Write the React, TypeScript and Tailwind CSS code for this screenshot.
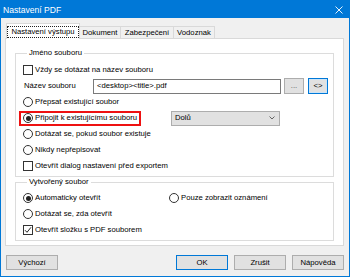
import React from "react"

const Check = ({ on }: { on?: boolean }) => (
  <span className="w-[10px] h-[10px] shrink-0 border border-[#333333] bg-white flex items-center justify-center">
    {on && (
      <svg width="8" height="8" viewBox="0 0 8 8">
        <path d="M1 4.2 L3 6.3 L7 1.3" stroke="#222222" strokeWidth="1" fill="none" />
      </svg>
    )}
  </span>
)

const Radio = ({ on }: { on?: boolean }) => (
  <span className="w-[10px] h-[10px] shrink-0 rounded-full border border-[#333333] bg-white flex items-center justify-center">
    {on && <span className="w-[5px] h-[5px] rounded-full bg-[#222222]" />}
  </span>
)

const Option = ({
  kind,
  on,
  label,
}: {
  kind: "check" | "radio"
  on?: boolean
  label: string
}) => (
  <div className="flex items-center gap-[2px]">
    {kind === "check" ? <Check on={on} /> : <Radio on={on} />}
    <span className="whitespace-nowrap">{label}</span>
  </div>
)

const Row = ({ children }: { children: React.ReactNode }) => (
  <div className="h-[16px] flex items-center">{children}</div>
)

const Btn = ({
  label,
  primary,
  className = "",
}: {
  label: string
  primary?: boolean
  className?: string
}) => (
  <div
    className={[
      "h-[15px] flex items-center justify-center bg-[#e1e1e1] border",
      primary ? "border-[#0078d7]" : "border-[#adadad]",
      className,
    ].join(" ")}
  >
    {label}
  </div>
)

export default function App() {
  return (
    <div className="w-[350px] h-[277px] flex flex-col border border-[#0078d7] bg-[#f0f0f0] text-black text-[7.7px] leading-[10px] font-['Liberation_Sans',Arial,sans-serif]">
      {/* title bar */}
      <div className="h-[17px] shrink-0 bg-[#0078d7] flex items-center justify-between pl-[2px] pr-[6px] text-white text-[8.6px]">
        <span>Nastavení PDF</span>
        <svg width="8" height="8" viewBox="0 0 8 8">
          <path d="M0.5 0.5 L7.5 7.5 M7.5 0.5 L0.5 7.5" stroke="#ffffff" strokeWidth="0.9" />
        </svg>
      </div>

      <div className="flex-1 flex flex-col pt-[5px] pl-[4px] pr-[5px]">
        {/* tabs */}
        <div className="h-[15px] flex items-end relative z-10">
          <div className="ml-[1px] w-[74px] h-[16px] mb-[-1px] bg-white border border-b-0 border-[#d9d9d9] flex items-center justify-center">
            <span className="border border-dotted border-[#222222] px-[3px] leading-[10px]">
              Nastavení výstupu
            </span>
          </div>
          <div className="w-[41px] h-[12px] border border-l-0 border-b-0 border-[#d9d9d9] flex items-center justify-center">
            Dokument
          </div>
          <div className="w-[53px] h-[12px] border border-l-0 border-b-0 border-[#d9d9d9] flex items-center justify-center">
            Zabezpečení
          </div>
          <div className="w-[41px] h-[12px] border border-l-0 border-b-0 border-[#d9d9d9] flex items-center justify-center">
            Vodoznak
          </div>
        </div>

        {/* panel */}
        <div className="h-[208px] bg-white border border-[#d9d9d9] pt-[9px] px-[9px]">
          <fieldset className="border border-[#dcdcdc] pl-[7px] pt-[4px] pb-[2px]">
            <legend className="ml-[4px] px-[2px] leading-[10px]">Jméno souboru</legend>
            <Row>
              <Option kind="check" label="Vždy se dotázat na název souboru" />
            </Row>
            <Row>
              <span className="w-[70px] pl-[1px]">Název souboru</span>
              <div className="w-[188px] h-[15px] border border-[#7a7a7a] bg-white flex items-center pl-[3px]">
                {"<desktop><title>.pdf"}
              </div>
              <Btn label="..." className="ml-[3px] w-[20px] h-[16px] text-[#555555]" />
              <Btn label="<>" primary className="ml-[4px] w-[20px] h-[16px] shadow-[inset_0_0_0_1px_#cce4f7]" />
            </Row>
            <Row>
              <Option kind="radio" label="Přepsat existující soubor" />
            </Row>
            <Row>
              <div className="w-[122px] -ml-[4px] h-[15px] border-2 border-[#ee1111] pl-[2px] flex items-center">
                <Option kind="radio" on label="Připojit k existujícímu souboru" />
              </div>
              <div className="ml-[30px] w-[109px] h-[15px] bg-[#e1e1e1] border border-[#adadad] flex items-center justify-between pl-[3px] pr-[4px]">
                <span>Dolů</span>
                <svg width="6" height="4" viewBox="0 0 6 4">
                  <path d="M0.5 0.5 L3 3 L5.5 0.5" stroke="#444444" strokeWidth="0.8" fill="none" />
                </svg>
              </div>
            </Row>
            <Row>
              <Option kind="radio" label="Dotázat se, pokud soubor existuje" />
            </Row>
            <Row>
              <Option kind="radio" label="Nikdy nepřepisovat" />
            </Row>
            <Row>
              <Option kind="check" label="Otevřít dialog nastavení před exportem" />
            </Row>
          </fieldset>

          <fieldset className="border border-[#dcdcdc] pl-[7px] pt-[3px] pb-[2px]">
            <legend className="ml-[4px] px-[2px] leading-[10px]">Vytvořený soubor</legend>
            <Row>
              <div className="w-[146px]">
                <Option kind="radio" on label="Automaticky otevřít" />
              </div>
              <Option kind="radio" label="Pouze zobrazit oznámení" />
            </Row>
            <Row>
              <Option kind="radio" label="Dotázat se, zda otevřít" />
            </Row>
            <Row>
              <Option kind="check" on label="Otevřít složku s PDF souborem" />
            </Row>
          </fieldset>
        </div>

        {/* bottom buttons */}
        <div className="mt-[9px] flex justify-between">
          <Btn label="Výchozí" className="ml-[1px] w-[52px]" />
          <div className="flex gap-[6px]">
            <Btn label="OK" primary className="w-[52px]" />
            <Btn label="Zrušit" className="w-[52px]" />
            <Btn label="Nápověda" className="w-[52px]" />
          </div>
        </div>
      </div>
    </div>
  )
}
